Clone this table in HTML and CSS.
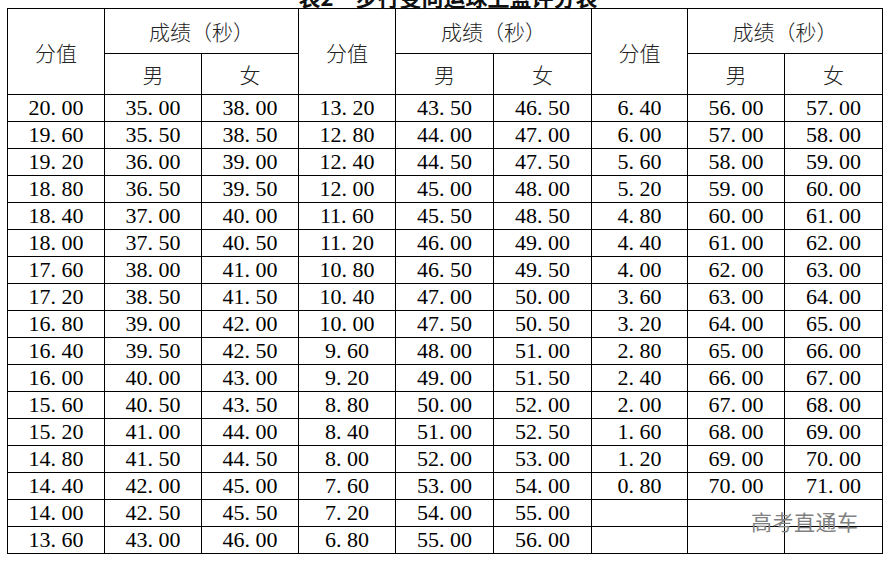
FILE: index.html
```html
<!DOCTYPE html>
<html lang="zh">
<head>
<meta charset="utf-8">
<link rel="stylesheet" href="styles.css">
</head>
<body>
<div class="page">
  <div class="title"><span>表2　步行变向运球上篮评分表</span></div>
  <table class="score">
    <colgroup>
      <col class="c97"><col class="c97"><col class="c97"><col class="c97"><col class="c98"><col class="c98"><col class="c96"><col class="c97"><col class="c98">
    </colgroup>
    <thead>
      <tr class="h1">
        <th rowspan="2">分值</th><th colspan="2">成绩（秒）</th>
        <th rowspan="2">分值</th><th colspan="2">成绩（秒）</th>
        <th rowspan="2">分值</th><th colspan="2">成绩（秒）</th>
      </tr>
      <tr class="h2">
        <th>男</th><th>女</th><th>男</th><th>女</th><th>男</th><th>女</th>
      </tr>
    </thead>
    <tbody>
      <tr><td>20<span class="d">.</span>00</td><td>35<span class="d">.</span>00</td><td>38<span class="d">.</span>00</td><td>13<span class="d">.</span>20</td><td>43<span class="d">.</span>50</td><td>46<span class="d">.</span>50</td><td>6<span class="d">.</span>40</td><td>56<span class="d">.</span>00</td><td>57<span class="d">.</span>00</td></tr>
      <tr><td>19<span class="d">.</span>60</td><td>35<span class="d">.</span>50</td><td>38<span class="d">.</span>50</td><td>12<span class="d">.</span>80</td><td>44<span class="d">.</span>00</td><td>47<span class="d">.</span>00</td><td>6<span class="d">.</span>00</td><td>57<span class="d">.</span>00</td><td>58<span class="d">.</span>00</td></tr>
      <tr><td>19<span class="d">.</span>20</td><td>36<span class="d">.</span>00</td><td>39<span class="d">.</span>00</td><td>12<span class="d">.</span>40</td><td>44<span class="d">.</span>50</td><td>47<span class="d">.</span>50</td><td>5<span class="d">.</span>60</td><td>58<span class="d">.</span>00</td><td>59<span class="d">.</span>00</td></tr>
      <tr><td>18<span class="d">.</span>80</td><td>36<span class="d">.</span>50</td><td>39<span class="d">.</span>50</td><td>12<span class="d">.</span>00</td><td>45<span class="d">.</span>00</td><td>48<span class="d">.</span>00</td><td>5<span class="d">.</span>20</td><td>59<span class="d">.</span>00</td><td>60<span class="d">.</span>00</td></tr>
      <tr><td>18<span class="d">.</span>40</td><td>37<span class="d">.</span>00</td><td>40<span class="d">.</span>00</td><td>11<span class="d">.</span>60</td><td>45<span class="d">.</span>50</td><td>48<span class="d">.</span>50</td><td>4<span class="d">.</span>80</td><td>60<span class="d">.</span>00</td><td>61<span class="d">.</span>00</td></tr>
      <tr><td>18<span class="d">.</span>00</td><td>37<span class="d">.</span>50</td><td>40<span class="d">.</span>50</td><td>11<span class="d">.</span>20</td><td>46<span class="d">.</span>00</td><td>49<span class="d">.</span>00</td><td>4<span class="d">.</span>40</td><td>61<span class="d">.</span>00</td><td>62<span class="d">.</span>00</td></tr>
      <tr><td>17<span class="d">.</span>60</td><td>38<span class="d">.</span>00</td><td>41<span class="d">.</span>00</td><td>10<span class="d">.</span>80</td><td>46<span class="d">.</span>50</td><td>49<span class="d">.</span>50</td><td>4<span class="d">.</span>00</td><td>62<span class="d">.</span>00</td><td>63<span class="d">.</span>00</td></tr>
      <tr><td>17<span class="d">.</span>20</td><td>38<span class="d">.</span>50</td><td>41<span class="d">.</span>50</td><td>10<span class="d">.</span>40</td><td>47<span class="d">.</span>00</td><td>50<span class="d">.</span>00</td><td>3<span class="d">.</span>60</td><td>63<span class="d">.</span>00</td><td>64<span class="d">.</span>00</td></tr>
      <tr><td>16<span class="d">.</span>80</td><td>39<span class="d">.</span>00</td><td>42<span class="d">.</span>00</td><td>10<span class="d">.</span>00</td><td>47<span class="d">.</span>50</td><td>50<span class="d">.</span>50</td><td>3<span class="d">.</span>20</td><td>64<span class="d">.</span>00</td><td>65<span class="d">.</span>00</td></tr>
      <tr><td>16<span class="d">.</span>40</td><td>39<span class="d">.</span>50</td><td>42<span class="d">.</span>50</td><td>9<span class="d">.</span>60</td><td>48<span class="d">.</span>00</td><td>51<span class="d">.</span>00</td><td>2<span class="d">.</span>80</td><td>65<span class="d">.</span>00</td><td>66<span class="d">.</span>00</td></tr>
      <tr><td>16<span class="d">.</span>00</td><td>40<span class="d">.</span>00</td><td>43<span class="d">.</span>00</td><td>9<span class="d">.</span>20</td><td>49<span class="d">.</span>00</td><td>51<span class="d">.</span>50</td><td>2<span class="d">.</span>40</td><td>66<span class="d">.</span>00</td><td>67<span class="d">.</span>00</td></tr>
      <tr><td>15<span class="d">.</span>60</td><td>40<span class="d">.</span>50</td><td>43<span class="d">.</span>50</td><td>8<span class="d">.</span>80</td><td>50<span class="d">.</span>00</td><td>52<span class="d">.</span>00</td><td>2<span class="d">.</span>00</td><td>67<span class="d">.</span>00</td><td>68<span class="d">.</span>00</td></tr>
      <tr><td>15<span class="d">.</span>20</td><td>41<span class="d">.</span>00</td><td>44<span class="d">.</span>00</td><td>8<span class="d">.</span>40</td><td>51<span class="d">.</span>00</td><td>52<span class="d">.</span>50</td><td>1<span class="d">.</span>60</td><td>68<span class="d">.</span>00</td><td>69<span class="d">.</span>00</td></tr>
      <tr><td>14<span class="d">.</span>80</td><td>41<span class="d">.</span>50</td><td>44<span class="d">.</span>50</td><td>8<span class="d">.</span>00</td><td>52<span class="d">.</span>00</td><td>53<span class="d">.</span>00</td><td>1<span class="d">.</span>20</td><td>69<span class="d">.</span>00</td><td>70<span class="d">.</span>00</td></tr>
      <tr><td>14<span class="d">.</span>40</td><td>42<span class="d">.</span>00</td><td>45<span class="d">.</span>00</td><td>7<span class="d">.</span>60</td><td>53<span class="d">.</span>00</td><td>54<span class="d">.</span>00</td><td>0<span class="d">.</span>80</td><td>70<span class="d">.</span>00</td><td>71<span class="d">.</span>00</td></tr>
      <tr><td>14<span class="d">.</span>00</td><td>42<span class="d">.</span>50</td><td>45<span class="d">.</span>50</td><td>7<span class="d">.</span>20</td><td>54<span class="d">.</span>00</td><td>55<span class="d">.</span>00</td><td></td><td></td><td></td></tr>
      <tr><td>13<span class="d">.</span>60</td><td>43<span class="d">.</span>00</td><td>46<span class="d">.</span>00</td><td>6<span class="d">.</span>80</td><td>55<span class="d">.</span>00</td><td>56<span class="d">.</span>00</td><td></td><td></td><td></td></tr>
    </tbody>
  </table>
  <div class="watermark">高考直通车</div>
</div>
</body>
</html>
```

FILE: styles.css
```css
html, body {
  margin: 0;
  padding: 0;
  background: #ffffff;
}

.page {
  position: relative;
  width: 888px;
  height: 562px;
  overflow: hidden;
  padding-left: 7px;
  box-sizing: border-box;
}

.title {
  height: 8px;
  width: 876px;
  display: flex;
  justify-content: center;
  align-items: flex-end;
}

.title span {
  display: block;
  font-family: "Noto Sans CJK SC", sans-serif;
  font-weight: 700;
  font-size: 22px;
  line-height: 22px;
  margin-bottom: 1px;
  margin-left: 6px;
  color: #111;
  white-space: nowrap;
}

.score {
  border-collapse: collapse;
  table-layout: fixed;
  width: 876px;
}

.c97 { width: 97px; }
.c98 { width: 98px; }
.c96 { width: 96px; }

.score th,
.score td {
  border: 1px solid #000;
  padding: 0;
  text-align: center;
  vertical-align: middle;
}

.score th {
  font-family: "Noto Sans CJK SC", sans-serif;
  font-weight: 300;
  font-size: 21px;
  line-height: 24px;
  color: #222;
}

.h1 { height: 45px; }
.h2 { height: 41px; }

.score td {
  font-family: "Liberation Serif", "Times New Roman", serif;
  font-size: 22px;
  line-height: 22px;
  height: 26px;
  color: #000;
}

.score tbody tr { height: 26px; }

.d {
  display: inline-block;
  width: 11px;
  text-align: left;
}

.watermark {
  position: absolute;
  left: 751px;
  top: 507px;
  font-family: "Noto Sans CJK SC", sans-serif;
  font-size: 21px;
  line-height: 28px;
  color: #808080;
  letter-spacing: 0.5px;
}
```
